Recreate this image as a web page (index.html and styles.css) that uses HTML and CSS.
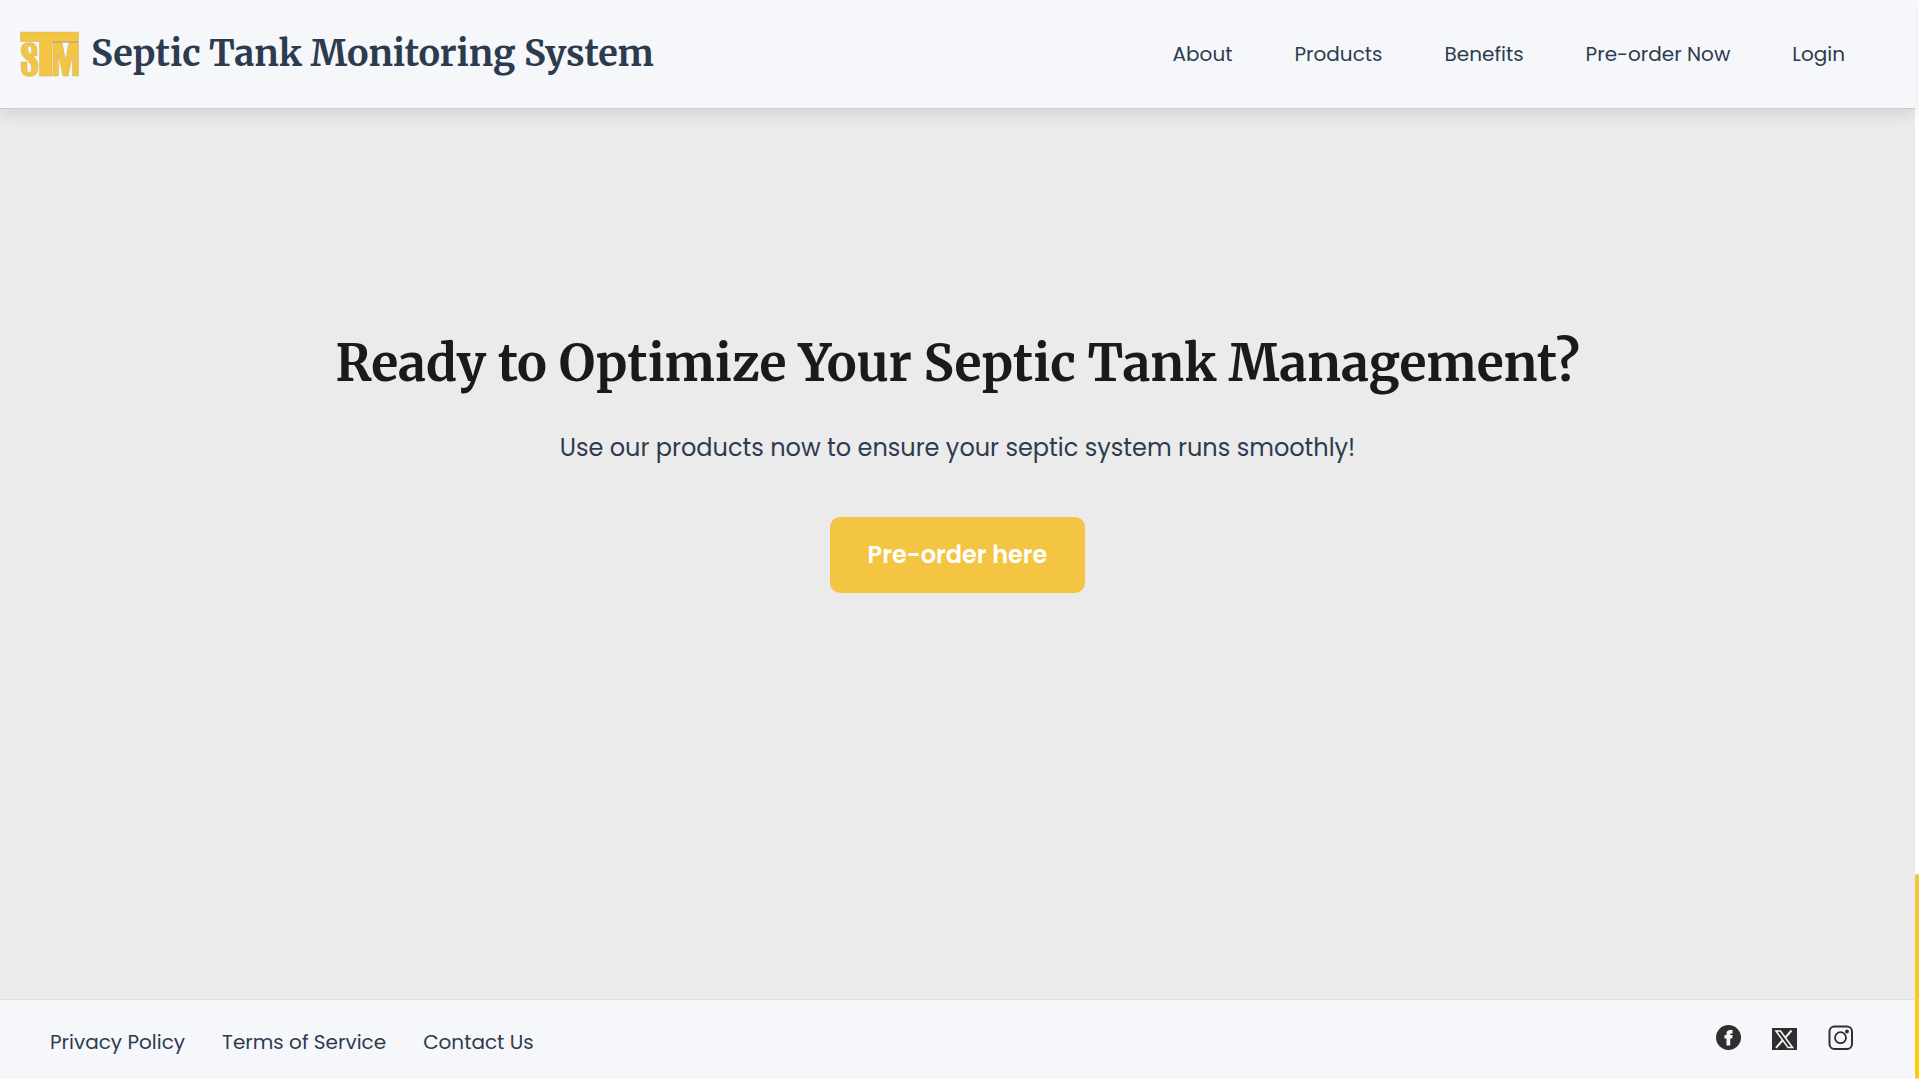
FILE: index.html
```html
<!DOCTYPE html>
<html lang="en">
<head>
<meta charset="utf-8">
<meta name="viewport" content="width=device-width, initial-scale=1">
<title>Septic Tank Monitoring System</title>
<link rel="stylesheet" href="styles.css">
</head>
<body>
<div class="page">
  <header class="header">
    <a class="brand" href="#">
      <svg class="brand-logo" viewBox="0 0 60 46" aria-hidden="true">
        <path class="logo-fill" d="M0.500 1H58.500V10.500H32V45H19.500V10.500H0.500Z"/>
        <path class="logo-fill" d="M17 25H11.500V18Q11.500 15 9.500 15Q7.500 15 7.500 18Q7.500 20 9.500 22L14 26Q18 29.500 18 34.500V37Q18 45.500 9.500 45.500Q1 45.500 1 37V31H7V38.500Q7 41.500 9.200 41.500Q11.500 41.500 11.500 38.500V36Q11.500 33 8.500 30.500L5 27.500Q1 24 1 19Q1 11.500 9.500 11.500Q17 11.500 17 19Z"/>
        <path class="logo-fill" d="M33 45V11.500H42L45.500 29L49 11.500H58.500V45H52.500V24L48 45H43L38.500 24V45Z"/>
        <path class="logo-line" d="M32 11H58.500"/>
      </svg>
      <span class="brand-name">Septic Tank Monitoring System</span>
    </a>
    <nav class="nav" aria-label="Main">
      <a href="#about">About</a>
      <a href="#products">Products</a>
      <a href="#benefits">Benefits</a>
      <a href="#preorder">Pre-order Now</a>
      <a href="#login">Login</a>
    </nav>
  </header>

  <main class="cta" id="preorder">
    <h1 class="cta-title">Ready to Optimize Your Septic Tank Management?</h1>
    <p class="cta-text">Use our products now to ensure your septic system runs smoothly!</p>
    <button class="cta-button" type="button">Pre-order here</button>
  </main>

  <footer class="footer">
    <nav class="footer-links" aria-label="Footer">
      <a href="#privacy">Privacy Policy</a>
      <a href="#terms">Terms of Service</a>
      <a href="#contact">Contact Us</a>
    </nav>
    <div class="social">
      <a href="#facebook" aria-label="Facebook">
        <svg viewBox="0 0 26 26"><circle cx="12.500" cy="12.500" r="12.500" fill="#2f2f2f"/><path fill="#f5f7fb" d="M10.500 20.500V13.500H8.500V10H10.500V8.500Q10.500 5 14 5H16.500V8.500H15Q14.200 8.500 14.200 9.300V10H16.600L16.200 13.500H14.200V20.500Z"/></svg>
      </a>
      <a href="#x" aria-label="X">
        <svg viewBox="0 0 26 26"><path fill="#2f2f2f" d="M0 3H25V25H0Z"/><path fill="none" stroke="#f5f7fb" stroke-width="1.600" d="M4 6H8.500L20.500 22.500H16Z"/><path fill="none" stroke="#f5f7fb" stroke-width="2" d="M19.500 5.500L13.500 12.300M10.500 15.500L4 22.800"/></svg>
      </a>
      <a href="#instagram" aria-label="Instagram">
        <svg viewBox="0 0 26 26"><rect x="1.500" y="1.500" width="22.500" height="22.500" rx="5" fill="none" stroke="#2f2f2f" stroke-width="2"/><circle cx="12.500" cy="12.700" r="5.500" fill="none" stroke="#2f2f2f" stroke-width="1.800"/><circle cx="19" cy="6.500" r="1.900" fill="#2f2f2f"/></svg>
      </a>
    </div>
  </footer>
</div>
<div class="scroll-rail" aria-hidden="true"><div class="scroll-thumb"></div></div>
</body>
</html>
```

FILE: styles.css
```css
* { box-sizing: border-box; }

body {
  margin: 0;
  display: flex;
  min-height: 100vh;
  background: #ffffff;
  color: #2d3b4e;
  font-family: Poppins, Inter, sans-serif;
  font-size: 20px;
  line-height: 30px;
}

a { color: inherit; text-decoration: none; }

.page {
  flex: 1;
  display: flex;
  flex-direction: column;
  background: #ebebeb;
}

.header {
  display: flex;
  align-items: center;
  justify-content: space-between;
  padding: 24px 70px 24px 20px;
  background: #f5f7fb;
  border-bottom: 1px solid #cccccc;
  box-shadow: 0 4px 16px rgba(0, 0, 0, 0.12);
}

.brand { display: flex; align-items: center; gap: 11px; }
.brand-logo { width: 60px; height: 46px; }
.logo-fill { fill: #f4c542; stroke: #c9b070; stroke-width: 0.5; }
.logo-line { stroke: #b89a4a; stroke-width: 1; }

.brand-name {
  font-family: Merriweather, "Noto Serif", serif;
  font-size: 36px;
  line-height: 60px;
  font-weight: 700;
}

.nav { display: flex; gap: 62px; }

.cta {
  flex: 1;
  display: flex;
  flex-direction: column;
  align-items: center;
  padding: 217px 24px 48px;
  text-align: center;
}

.cta-title {
  margin: 0 0 26px;
  color: #1a1a1a;
  font-family: Merriweather, "Noto Serif", serif;
  font-size: 50px;
  line-height: 76px;
  font-weight: 700;
}

.cta-text {
  margin: 0 0 49px;
  font-size: 24px;
  line-height: 40px;
}

.cta-button {
  padding: 18px 38px;
  border: 0;
  border-radius: 10px;
  background: #f4c542;
  color: #ffffff;
  font: 600 24px/40px Poppins, Inter, sans-serif;
  cursor: pointer;
}

.footer {
  display: flex;
  align-items: flex-start;
  justify-content: space-between;
  padding: 25px 61px 22px 50px;
  background: #f5f7fb;
  border-top: 1px solid #dcdedf;
}

.footer-links { display: flex; gap: 37px; padding-top: 2px; }

.social { display: flex; gap: 30px; }
.social a { display: flex; }
.social svg { width: 26px; height: 26px; }

.scroll-rail {
  width: 4px;
  display: flex;
  flex-direction: column;
  justify-content: flex-end;
}

.scroll-thumb {
  height: 19%;
  border-radius: 2px;
  background: linear-gradient(#f4c542, #ffcc00);
}
```
